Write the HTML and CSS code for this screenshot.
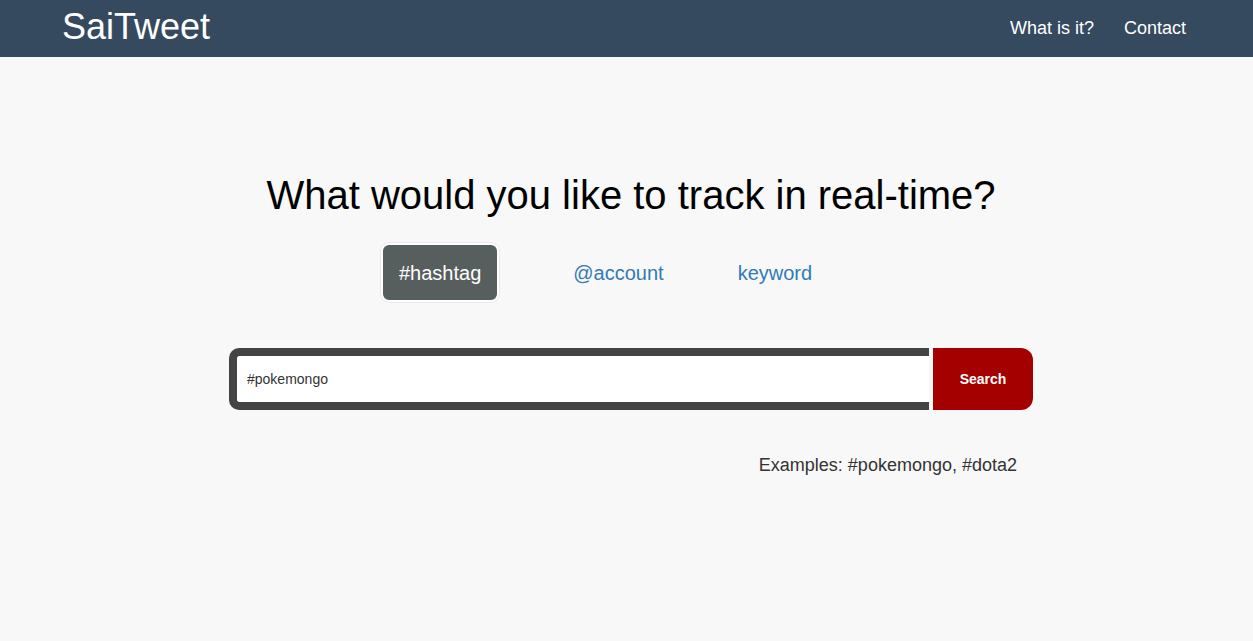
FILE: index.html
```html
<!DOCTYPE html>
<html lang="en">
<head>
<meta charset="utf-8">
<title>SaiTweet</title>
<link rel="stylesheet" href="styles.css">
</head>
<body>
<header class="navbar">
  <a class="brand" href="#">SaiTweet</a>
  <nav class="nav-links">
    <a href="#">What is it?</a>
    <a href="#">Contact</a>
  </nav>
</header>
<main class="wrap">
  <h1 class="title">What would you like to track in real-time?</h1>
  <ul class="tabs">
    <li class="tab active">#hashtag</li>
    <li class="tab tab-account">@account</li>
    <li class="tab tab-keyword">keyword</li>
  </ul>
  <form class="search">
    <input class="search-input" type="text" value="#pokemongo">
    <button class="search-btn" type="button">Search</button>
  </form>
  <p class="examples">Examples: #pokemongo, #dota2</p>
</main>
</body>
</html>
```
FILE: styles.css
```css
html, body {
  margin: 0;
  padding: 0;
}
body {
  background: #f8f8f8;
  font-family: "Liberation Sans", Arial, sans-serif;
  color: #333;
}
.navbar {
  height: 57px;
  background: #354a5f;
  display: flex;
  align-items: center;
  justify-content: space-between;
  padding: 0 52px 0 62px;
}
.brand {
  color: #fff;
  text-decoration: none;
  font-size: 36px;
  line-height: 36px;
  margin-bottom: 4px;
}
.nav-links {
  display: flex;
  margin-bottom: 2px;
}
.nav-links a {
  color: #fff;
  text-decoration: none;
  font-size: 18px;
  line-height: 20px;
  padding: 0 15px;
}
.wrap {
  box-sizing: border-box;
  width: 813px;
  margin: 0 auto;
  padding-left: 9px;
}
.title {
  margin: 116px 0 0;
  text-align: center;
  font-weight: normal;
  font-size: 40px;
  line-height: 44px;
  color: #000;
}
.tabs {
  list-style: none;
  margin: 26px 0 0;
  padding: 0 0 0 152px;
  display: flex;
  align-items: center;
}
.tab {
  font-size: 20px;
  line-height: 23px;
  padding: 17px 16px 15px;
  color: #337ab7;
  border: 2px solid transparent;
  border-radius: 8px;
}
.tab.active {
  background: #575e5e;
  color: #fff;
  border-color: #fff;
  box-shadow: 0 0 0 1px #ebebeb;
}
.tab-account {
  margin-left: 56px;
}
.tab-keyword {
  margin-left: 38px;
}
.search {
  display: flex;
  margin: 46px 0 0;
  height: 62px;
}
.search-input {
  flex: 1;
  box-sizing: border-box;
  height: 62px;
  border: 8px solid #444;
  border-right: none;
  border-radius: 10px 0 0 10px;
  background: #fff;
  padding: 0 0 0 10px;
  font-family: "Liberation Sans", Arial, sans-serif;
  font-size: 14px;
  color: #333;
  outline: none;
  margin: 0 4px 0 0;
}
.search-btn {
  width: 100px;
  height: 62px;
  border: none;
  border-radius: 0 12px 12px 0;
  background: #a50000;
  color: #fff;
  font-family: "Liberation Sans", Arial, sans-serif;
  font-weight: bold;
  font-size: 14px;
  padding: 0;
}
.examples {
  margin: 45px 0 0;
  padding-right: 16px;
  text-align: right;
  font-size: 18px;
  line-height: 20px;
  color: #333;
}
```
